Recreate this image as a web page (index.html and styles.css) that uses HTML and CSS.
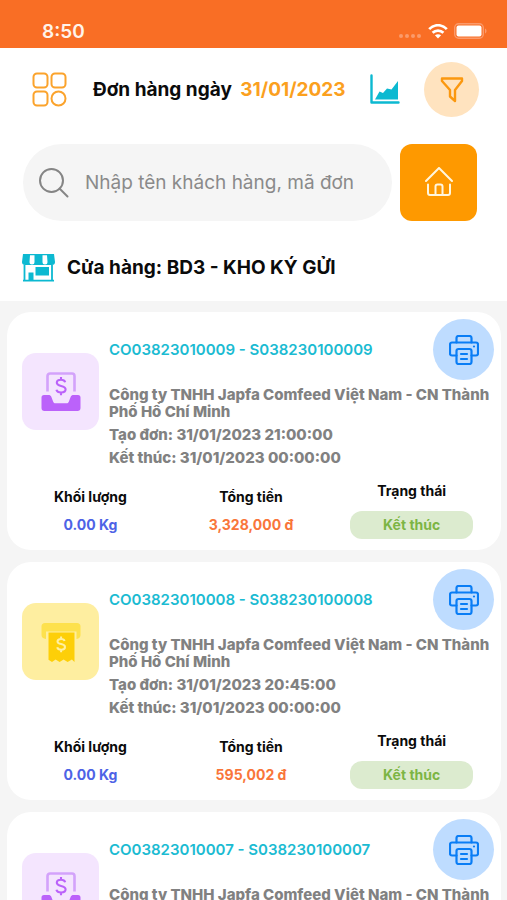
FILE: index.html
```html
<!DOCTYPE html>
<html lang="vi">
<head>
<meta charset="utf-8">
<meta name="viewport" content="width=device-width, initial-scale=1">
<title>Đơn hàng</title>
<link rel="stylesheet" href="styles.css">
</head>
<body>
<svg class="sprite" aria-hidden="true">
  <symbol id="i-print" viewBox="0 0 30 30">
    <g fill="none" stroke="#0a7df5" stroke-width="2.200" stroke-linejoin="round" stroke-linecap="round">
      <path d="M7.500 7.500V3a2 2 0 0 1 2-2h11a2 2 0 0 1 2 2v4.500"/>
      <path d="M7.500 20.500H3a2 2 0 0 1-2-2V9.500a2 2 0 0 1 2-2h24a2 2 0 0 1 2 2v9a2 2 0 0 1-2 2h-4.500"/>
      <path d="M9.500 14h11a2 2 0 0 1 2 2v11a2 2 0 0 1-2 2h-11a2 2 0 0 1-2-2V16a2 2 0 0 1 2-2z"/>
      <path d="M12 19h6M12 24h6"/>
    </g>
    <circle cx="25" cy="11.500" r="1.100" fill="#0a7df5"/>
  </symbol>
  <symbol id="i-tray" viewBox="0 0 40 40">
    <path d="M6.500 19.500V4a2.500 2.500 0 0 1 2.500-2.500h22A2.500 2.500 0 0 1 33.500 4v15.500" fill="none" stroke="#d3a2fb" stroke-width="2.600"/>
    <path d="M3 23h4.500c1.400 0 2.300.6 2.800 1.800l1.800 4.600c.5 1.300 1.200 1.900 2.600 1.900h10.600c1.400 0 2.100-.6 2.600-1.900l1.800-4.600c.5-1.200 1.400-1.800 2.800-1.800H37c1.700 0 2.500.9 2.500 2.500V36c0 1.900-1.100 3-3 3h-33c-1.900 0-3-1.100-3-3V25.500C.5 23.900 1.300 23 3 23z" fill="#bb62fa"/>
    <path d="M24.200 10.300c-.5-1.700-2-2.500-4.200-2.500-2.500 0-4.200 1.100-4.200 3 0 4.300 8.800 1.900 8.800 6.500 0 2-1.800 3.200-4.500 3.200-2.500 0-4.200-1-4.700-2.800M20 5v2.800M20 20.500v2.800" fill="none" stroke="#bb62fa" stroke-width="2.100"/>
  </symbol>
  <symbol id="i-bill" viewBox="0 0 40 40">
    <path d="M4 1h32c2.200 0 3.500 1.300 3.500 3.500V13c0 2.300-1.400 3.800-4 4V9.500H5v7.500c-2.900-.2-4.500-1.700-4.500-4V4.500C.5 2.300 1.800 1 4 1z" fill="#fde14d"/>
    <path d="M7.500 10.500h26V40l-2.600-2.600-4.300 2.600-4-2.600-4 2.600-4-2.600-3.600 2.600-3.500-2.300z" fill="#fdcf08"/>
    <path d="M23.600 18.900c-.4-1.400-1.700-2-3.500-2-2.200 0-3.600.9-3.600 2.500 0 3.600 7.500 1.600 7.500 5.500 0 1.700-1.500 2.800-3.800 2.800-2.200 0-3.600-.9-4-2.500M20.100 14.500v2.400M20.100 27.700v2.500" fill="none" stroke="#fff0a3" stroke-width="2"/>
  </symbol>
</svg>

<div class="statusbar">
  <span class="clock">8:50</span>
  <div class="signals">
    <svg width="24" height="6" viewBox="0 0 24 6" fill="#fb9a6b"><circle cx="3" cy="3" r="2"/><circle cx="9" cy="3" r="2"/><circle cx="15" cy="3" r="2"/><circle cx="21" cy="3" r="2"/></svg>
    <svg width="20" height="15" viewBox="0 0 20 15"><g fill="none" stroke="#fff" stroke-width="2.700"><path d="M1.200 5.200C6-.1 14-.1 18.800 5.200"/><path d="M4.600 8.800c3-3 7.800-3 10.800 0"/></g><path d="M6.900 11.200c1.800-1.400 4.400-1.400 6.200 0L10 14.500z" fill="#fff"/></svg>
    <svg width="33" height="16" viewBox="0 0 33 16"><rect x=".7" y=".7" width="28.600" height="14.600" rx="4" fill="none" stroke="#fb9a6b" stroke-width="1.400"/><rect x="2.500" y="2.500" width="25" height="11" rx="2" fill="#fff"/><path d="M31 5.500c2 .8 2 4.200 0 5z" fill="#fb9a6b"/></svg>
  </div>
</div>

<header class="top">
  <div class="toolbar">
    <button class="plain" type="button" aria-label="Menu">
      <svg width="35" height="35" viewBox="0 0 35 35" fill="none" stroke="#fba32c" stroke-width="2"><rect x="1.500" y="1.500" width="14" height="14" rx="3.500"/><rect x="19.500" y="1.500" width="14" height="14" rx="3.500"/><rect x="1.500" y="19.500" width="14" height="14" rx="3.500"/><circle cx="26.500" cy="26.500" r="7"/></svg>
    </button>
    <h1 class="heading">Đơn hàng ngày <span class="date">31/01/2023</span></h1>
    <button class="plain chart" type="button" aria-label="Thống kê">
      <svg width="30" height="31" viewBox="0 0 30 31"><path d="M1.500 1.500v27h27" fill="none" stroke="#0cb9d1" stroke-width="2.400" stroke-linecap="round" stroke-linejoin="round"/><path d="M5 25.500l4.500-8 3.500 1.500 4-4.500 4.500 1L28 7v18.500z" fill="#0cb9d1"/></svg>
    </button>
    <button class="round filter" type="button" aria-label="Lọc">
      <svg width="24" height="26" viewBox="0 0 24 26" fill="none" stroke="#fb980f" stroke-width="2.400" stroke-linejoin="round"><path d="M2 1.500h20v2.500l-7 9V24l-5-4.500V13L2 4z"/></svg>
    </button>
  </div>

  <form class="search">
    <label class="field">
      <svg width="30" height="30" viewBox="0 0 30 30" fill="none" stroke="#858585" stroke-width="2"><circle cx="12.500" cy="12.500" r="11.500"/><path d="M20.500 20.500l8 8" stroke-linecap="round"/></svg>
      <input type="search" aria-label="Tìm kiếm đơn hàng" placeholder="Nhập tên khách hàng, mã đơn">
    </label>
    <button class="home" type="button" aria-label="Trang chủ">
      <svg width="28" height="32" viewBox="0 0 28 32" fill="none" stroke="#fff6dd" stroke-width="2" stroke-linecap="round" stroke-linejoin="round"><path d="M1 14L14 1l13 13"/><path d="M3 17.500V26a2 2 0 0 0 2 2h18a2 2 0 0 0 2-2v-8.500"/><path d="M10.500 28V19.500a2 2 0 0 1 2-2h3a2 2 0 0 1 2 2V28"/></svg>
    </button>
  </form>

  <div class="store">
    <svg width="33" height="28" viewBox="0 0 33 28" fill="#0cb9d1"><path d="M1 0h31l1 8a3 3 0 0 1-3 3H3a3 3 0 0 1-3-3z"/><path d="M8 1.200h4.500V8a2.500 2.500 0 0 1-5 0zM20.500 1.200H25l.5 6.800a2.500 2.500 0 0 1-5 0z" fill="#fff"/><path d="M2.500 11v16M30 11v16M1 26.700h31" stroke="#0cb9d1" stroke-width="1.800"/><path d="M6.500 18.500h5V26h-5zM13.500 13h13.500v8.500H13.500z"/></svg>
    <h2 class="heading">Cửa hàng: BD3 - KHO KÝ GỬI</h2>
  </div>
</header>

<main class="orders">
  <article class="card">
    <div class="summary">
      <div class="badge violet"><svg width="40" height="40" aria-hidden="true"><use href="#i-tray"/></svg></div>
      <div class="info">
        <div class="row">
          <a class="code" href="#">CO03823010009 - S038230100009</a>
          <button class="round print" type="button" aria-label="In đơn"><svg width="30" height="30"><use href="#i-print"/></svg></button>
        </div>
        <p>Công ty TNHH Japfa Comfeed Việt Nam - CN Thành Phố Hồ Chí Minh</p>
        <p>Tạo đơn: 31/01/2023 21:00:00</p>
        <p>Kết thúc: 31/01/2023 00:00:00</p>
      </div>
    </div>
    <dl class="stats">
      <div><dt>Khối lượng</dt><dd class="weight">0.00 Kg</dd></div>
      <div><dt>Tổng tiền</dt><dd class="total">3,328,000 đ</dd></div>
      <div class="state"><dt>Trạng thái</dt><dd class="pill">Kết thúc</dd></div>
    </dl>
  </article>

  <article class="card">
    <div class="summary">
      <div class="badge yellow"><svg width="40" height="40" aria-hidden="true"><use href="#i-bill"/></svg></div>
      <div class="info">
        <div class="row">
          <a class="code" href="#">CO03823010008 - S038230100008</a>
          <button class="round print" type="button" aria-label="In đơn"><svg width="30" height="30"><use href="#i-print"/></svg></button>
        </div>
        <p>Công ty TNHH Japfa Comfeed Việt Nam - CN Thành Phố Hồ Chí Minh</p>
        <p>Tạo đơn: 31/01/2023 20:45:00</p>
        <p>Kết thúc: 31/01/2023 00:00:00</p>
      </div>
    </div>
    <dl class="stats">
      <div><dt>Khối lượng</dt><dd class="weight">0.00 Kg</dd></div>
      <div><dt>Tổng tiền</dt><dd class="total">595,002 đ</dd></div>
      <div class="state"><dt>Trạng thái</dt><dd class="pill">Kết thúc</dd></div>
    </dl>
  </article>

  <article class="card">
    <div class="summary">
      <div class="badge violet"><svg width="40" height="40" aria-hidden="true"><use href="#i-tray"/></svg></div>
      <div class="info">
        <div class="row">
          <a class="code" href="#">CO03823010007 - S038230100007</a>
          <button class="round print" type="button" aria-label="In đơn"><svg width="30" height="30"><use href="#i-print"/></svg></button>
        </div>
        <p>Công ty TNHH Japfa Comfeed Việt Nam - CN Thành</p>
      </div>
    </div>
  </article>
</main>
</body>
</html>
```
FILE: styles.css
```css
* { box-sizing: border-box; }

body {
  margin: 0;
  background: #f5f5f5;
  color: #0b0b0b;
  font-family: Inter, "Noto Sans", sans-serif;
}

h1, h2, p, dl, dd { margin: 0; }
svg { display: block; flex: none; }
.sprite { position: absolute; width: 0; height: 0; }

button {
  padding: 0;
  border: 0;
  background: none;
  cursor: pointer;
}

.statusbar {
  display: flex;
  justify-content: space-between;
  align-items: center;
  height: 48px;
  padding: 14px 20px 0 42px;
  background: #f96e25;
}
.clock { color: #fff3ea; font-size: 19px; font-weight: 600; }
.signals { display: flex; align-items: center; gap: 6px; }
.signals svg:first-child { align-self: flex-end; }

.top { padding: 14px 28px 19px 22px; background: #fff; }

.toolbar { display: flex; align-items: center; padding-left: 10px; }
.heading { font-size: 19px; line-height: 28px; font-weight: 700; white-space: nowrap; }
.toolbar .heading { flex: 1; margin-left: 26px; }
.date { margin-left: 4px; color: #fba01e; }
.chart { margin-right: 24px; }

.round {
  display: grid;
  place-items: center;
  flex: none;
  border-radius: 50%;
}
.filter { width: 55px; height: 55px; background: #ffe3bf; }

.search { display: flex; gap: 8px; margin-top: 27px; padding: 0 2px 0 1px; }
.field {
  display: flex;
  flex: 1;
  min-width: 0;
  align-items: center;
  gap: 16px;
  height: 77px;
  padding: 0 16px;
  border-radius: 39px;
  background: #f5f5f5;
}
.field input {
  flex: 1;
  min-width: 0;
  padding: 0;
  border: 0;
  outline: 0;
  background: none;
  color: #333;
  font: 400 19px/28px Inter, "Noto Sans", sans-serif;
}
.field input::placeholder { color: #8a8a8a; opacity: 1; }
.home {
  display: grid;
  place-items: center;
  width: 77px;
  height: 77px;
  border-radius: 12px;
  background: #fe9900;
}

.store { display: flex; align-items: center; gap: 12px; margin-top: 33px; }

.orders { display: grid; gap: 12px; padding: 11px 6px 12px 7px; }

.card {
  padding: 7px 7px 11px 15px;
  border-radius: 24px;
  background: #fff;
}

.summary { display: flex; align-items: flex-start; gap: 10px; }
.badge {
  display: grid;
  place-items: center;
  flex: none;
  width: 77px;
  height: 77px;
  margin-top: 34px;
  border-radius: 14px;
}
.violet { background: #f4e5fe; }
.yellow { background: #feeea0; }

.info { display: grid; flex: 1; min-width: 0; gap: 6px; }
.row { display: flex; justify-content: space-between; align-items: center; }
.code {
  color: #1bbbd2;
  font-size: 15px;
  font-weight: 600;
  text-decoration: none;
}
.print { width: 61px; height: 61px; background: #bedcff; }
.info p {
  color: #818181;
  font-size: 15px;
  line-height: 17px;
  font-weight: 800;
}

.stats {
  display: grid;
  grid-template-columns: repeat(3, 1fr);
  align-items: end;
  margin: 16px 2px 0 -12px;
  font-size: 14px;
  text-align: center;
}
.stats dt { line-height: 17px; font-weight: 700; }
.stats dd { line-height: 28px; font-weight: 700; }
.stats div { display: grid; gap: 6px; }
.stats .state { gap: 12px; justify-items: center; }
.weight { color: #4e63e6; }
.total { color: #f9763a; }
.pill {
  width: 123px;
  border-radius: 12px;
  background: #dcebcf;
  color: #7cb545;
}
```
